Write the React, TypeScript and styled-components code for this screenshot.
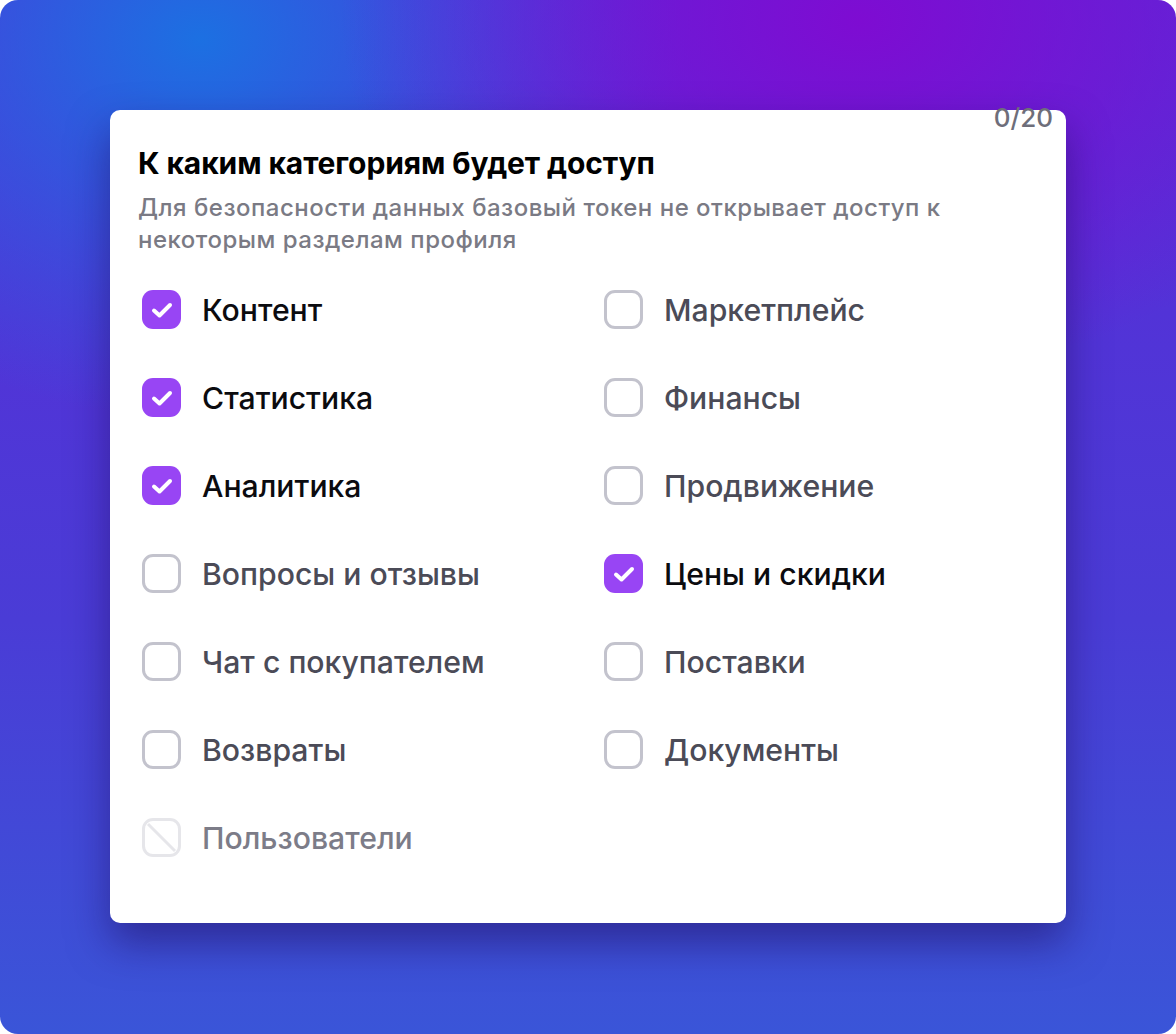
import styled, { createGlobalStyle } from "styled-components";

const GlobalStyle = createGlobalStyle`
  html, body {
    margin: 0;
    padding: 0;
    background: #ffffff;
  }
  body {
    font-family: Inter, "Noto Sans", "Liberation Sans", sans-serif;
    -webkit-font-smoothing: antialiased;
  }
`;

const Backdrop = styled.div`
  width: 1176px;
  height: 1034px;
  box-sizing: border-box;
  border-radius: 18px;
  padding: 110px 110px 0 110px;
  background:
    radial-gradient(ellipse 520px 360px at 860px 20px, rgba(126, 12, 210, 1) 0%, rgba(126, 12, 210, 0) 100%),
    radial-gradient(ellipse 480px 380px at 200px 40px, rgba(28, 112, 226, 1) 0%, rgba(28, 112, 226, 0) 100%),
    linear-gradient(180deg, #5a2ad8 0%, #4a3cd6 60%, #3a55d8 100%);
`;

const Card = styled.div`
  position: relative;
  width: 956px;
  height: 813px;
  box-sizing: border-box;
  background: #ffffff;
  border-radius: 10px;
  padding: 36px 28px 0 28px;
  box-shadow: 0 20px 40px rgba(30, 10, 90, 0.5);
`;

const Counter = styled.div`
  position: absolute;
  top: -8px;
  right: 13px;
  font-size: 26px;
  font-weight: 500;
  color: #6e6e7a;
`;

const Title = styled.h2`
  margin: 0;
  font-size: 30px;
  line-height: 34px;
  font-weight: 700;
  color: #000000;
  letter-spacing: -0.1px;
`;

const Subtitle = styled.p`
  margin: 12px 0 0 0;
  width: 840px;
  font-size: 24px;
  line-height: 32px;
  font-weight: 500;
  color: #7a7a84;
  letter-spacing: 0.5px;
`;

const Grid = styled.div`
  margin: 34px 0 0 4px;
  display: grid;
  grid-template-columns: 462px 1fr;
  row-gap: 49px;
`;

const Option = styled.label`
  display: flex;
  align-items: center;
  gap: 21px;
  height: 39px;
`;

const Box = styled.span<{ $state: "on" | "off" | "disabled" }>`
  flex: none;
  width: 39px;
  height: 39px;
  box-sizing: border-box;
  border-radius: 11px;
  display: flex;
  align-items: center;
  justify-content: center;
  background: ${(p) => (p.$state === "on" ? "#9845f4" : "#ffffff")};
  border: ${(p) =>
    p.$state === "on"
      ? "none"
      : p.$state === "disabled"
      ? "3px solid #e6e6ea"
      : "3px solid #c3c3cd"};
`;

const Label = styled.span<{ $state: "on" | "off" | "disabled" }>`
  font-size: 30.2px;
  font-weight: 500;
  letter-spacing: 0;
  color: ${(p) =>
    p.$state === "on" ? "#0b0b0f" : p.$state === "disabled" ? "#7c7c88" : "#4b4b57"};
`;

type State = "on" | "off" | "disabled";

const options: { label: string; state: State }[] = [
  { label: "Контент", state: "on" },
  { label: "Маркетплейс", state: "off" },
  { label: "Статистика", state: "on" },
  { label: "Финансы", state: "off" },
  { label: "Аналитика", state: "on" },
  { label: "Продвижение", state: "off" },
  { label: "Вопросы и отзывы", state: "off" },
  { label: "Цены и скидки", state: "on" },
  { label: "Чат с покупателем", state: "off" },
  { label: "Поставки", state: "off" },
  { label: "Возвраты", state: "off" },
  { label: "Документы", state: "off" },
  { label: "Пользователи", state: "disabled" },
];

function Mark({ state }: { state: State }) {
  if (state === "on") {
    return (
      <svg width="26" height="26" viewBox="0 0 26 26">
        <path
          d="M5 13.5 L10.5 18.5 L21 8"
          fill="none"
          stroke="#ffffff"
          strokeWidth="4"
          strokeLinecap="round"
          strokeLinejoin="round"
        />
      </svg>
    );
  }
  if (state === "disabled") {
    return (
      <svg width="33" height="33" viewBox="0 0 33 33">
        <path d="M3 3 L30 30" stroke="#e6e6ea" strokeWidth="3" />
      </svg>
    );
  }
  return null;
}

export default function App() {
  return (
    <>
      <GlobalStyle />
      <Backdrop>
        <Card>
          <Counter>0/20</Counter>
          <Title>К каким категориям будет доступ</Title>
          <Subtitle>
            Для безопасности данных базовый токен не открывает доступ к
            некоторым разделам профиля
          </Subtitle>
          <Grid>
            {options.map((o) => (
              <Option key={o.label}>
                <Box $state={o.state}>
                  <Mark state={o.state} />
                </Box>
                <Label $state={o.state}>{o.label}</Label>
              </Option>
            ))}
          </Grid>
        </Card>
      </Backdrop>
    </>
  );
}
